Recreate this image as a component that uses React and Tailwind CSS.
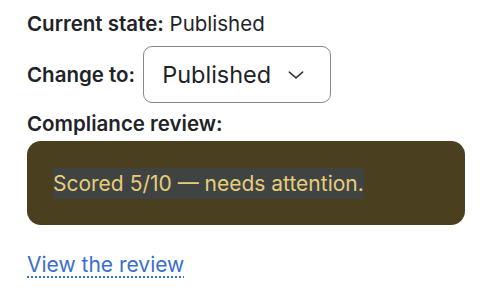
import React from "react";

export default function App() {
  return (
    <div className="min-h-[290px] w-[480px] bg-white pl-[27px] pr-[15px] pt-[10px] text-[#1f2328]" style={{ fontFamily: "Inter, 'Noto Sans', sans-serif" }}>
      <div className="text-[20.5px] leading-[28px]">
        <span className="font-semibold">Current state:</span> Published
      </div>
      <div className="mt-[8px] flex items-center gap-[8px]">
        <span className="text-[20.5px] font-semibold leading-[28px]">Change to:</span>
        <div className="flex h-[57px] w-[188px] items-center rounded-[9px] border border-[#8a8a8a] pl-[18px]">
          <span className="text-[23.5px] leading-[30px]">Published</span>
          <svg className="ml-[15px]" width="20" height="20" viewBox="0 0 24 24" fill="none" stroke="#333" strokeWidth="1.8" strokeLinecap="round" strokeLinejoin="round">
            <path d="M4 8.5l8 7 8-7" />
          </svg>
        </div>
      </div>
      <div className="mt-[7px] text-[20.5px] font-semibold leading-[28px]">Compliance review:</div>
      <div className="mt-[3px] flex h-[84px] w-[438px] items-center rounded-[14px] bg-[#4a3f1e] px-[26px]">
        <span className="bg-[#3f4443] py-[3px] text-[21px] leading-[25px] text-[#e9cc7a]">Scored 5/10 — needs attention.</span>
      </div>
      <div className="mt-[26px]">
        <a href="#" className="text-[21px] leading-[28px] text-[#3a6fcf] underline decoration-dotted decoration-[2px] underline-offset-[4px]">View the review</a>
      </div>
    </div>
  );
}
